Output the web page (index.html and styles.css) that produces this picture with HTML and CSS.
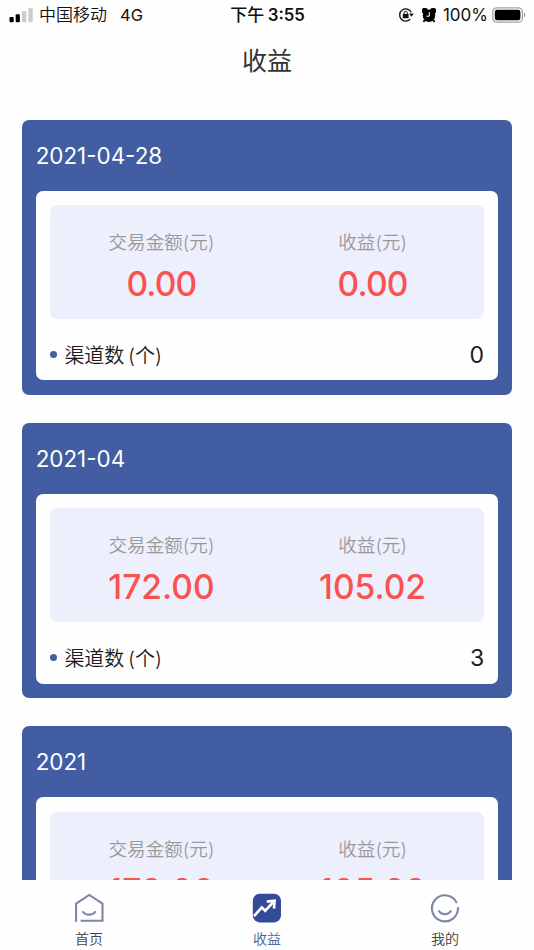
FILE: index.html
```html
<!DOCTYPE html>
<html lang="zh-CN">
<head>
<meta charset="utf-8">
<meta name="viewport" content="width=device-width, initial-scale=1">
<title>收益</title>
<link rel="stylesheet" href="styles.css">
</head>
<body>
<div class="app">
  <header class="status">
    <div class="status-left">
      <svg class="signal" width="24" height="16" viewBox="0 0 24 16"><rect x="0.5" y="10" width="4.2" height="5.2" rx="1" fill="#000"/><rect x="6.7" y="7.2" width="4.2" height="8" rx="1" fill="#000"/><rect x="13" y="4" width="4.4" height="11.2" rx="1" fill="#ccc"/><rect x="19.3" y="1" width="4.4" height="14.2" rx="1" fill="#ccc"/></svg>
      <span class="carrier">中国移动</span>
      <span class="network">4G</span>
    </div>
    <div class="status-time">下午 <span class="clock">3:55</span></div>
    <div class="status-right">
      <svg width="16" height="16" viewBox="0 0 16 16"><path d="M13.2 5.2A6.1 6.1 0 1 0 12.3 12.1" fill="none" stroke="#111" stroke-width="1.4"/><path d="M10.9 6.6h4.9l-2.3 3.2z" fill="#111"/><rect x="4.8" y="6.9" width="5.8" height="4.4" rx=".6" fill="#111"/><path d="M6.1 7.2V5.8a1.6 1.6 0 0 1 3.2 0v1.4" fill="none" stroke="#111" stroke-width="1"/></svg>
      <svg class="alarm" width="14" height="15" viewBox="0 0 14 15"><circle cx="7" cy="7.8" r="6.2"/><path d="M.2 4.8A3.2 3.2 0 0 1 5 .6L6 2 2 6zM13.8 4.8A3.2 3.2 0 0 0 9 .6L8 2l4 4z"/><path d="M2.7 12l-1.2 2M11.3 12l1.2 2" stroke="#000" stroke-width="1.8"/><path d="M7.3 4.2v4H4.4" fill="none" stroke="#fff" stroke-width="1"/></svg>
      <span class="percent">100%</span>
      <svg class="battery" width="34" height="16" viewBox="0 0 34 16"><rect x=".8" y=".8" width="29.6" height="14.4" rx="4" fill="#fff" stroke="#a3a3a3" stroke-width="1.3"/><rect x="2.8" y="2.8" width="25.6" height="10.4" rx="2.2" fill="#000"/><path d="M32 5.5c1.7.8 1.7 4.2 0 5z" fill="#999"/></svg>
    </div>
  </header>
  <h1 class="title">收益</h1>
  <main class="list">
    <section class="card">
      <h2 class="date">2021-04-28</h2>
      <div class="body">
        <div class="panel">
          <div class="stat"><span class="label">交易金额(元)</span><span class="value">0.00</span></div>
          <div class="stat"><span class="label">收益(元)</span><span class="value">0.00</span></div>
        </div>
        <div class="row"><span class="dot"></span><span class="name">渠道数 (个)</span><span class="count">0</span></div>
      </div>
    </section>
    <section class="card">
      <h2 class="date">2021-04</h2>
      <div class="body">
        <div class="panel">
          <div class="stat"><span class="label">交易金额(元)</span><span class="value wide">172.00</span></div>
          <div class="stat"><span class="label">收益(元)</span><span class="value wide">105.02</span></div>
        </div>
        <div class="row"><span class="dot"></span><span class="name">渠道数 (个)</span><span class="count">3</span></div>
      </div>
    </section>
    <section class="card">
      <h2 class="date">2021</h2>
      <div class="body">
        <div class="panel">
          <div class="stat"><span class="label">交易金额(元)</span><span class="value wide">172.00</span></div>
          <div class="stat"><span class="label">收益(元)</span><span class="value wide">105.02</span></div>
        </div>
      </div>
    </section>
  </main>
  <nav class="tabs">
    <a class="tab">
      <svg width="30" height="30" viewBox="0 0 30 30" fill="none" stroke="#7c86a5" stroke-width="2.1"><path d="M2.1 28.8V10.6L15.2 1.9 28.5 10.6V27.8H6.6"/><path d="M8.6 18.2c2.8 4.6 10.2 4.6 13 0"/></svg>
      <span>首页</span>
    </a>
    <a class="tab active">
      <svg width="30" height="30" viewBox="0 0 30 30"><rect x=".8" y="0.8" width="28.2" height="28.6" rx="7" fill="#334a97"/><path d="M2 23.2L9.8 14.4 13.2 17.8 21 9.4" fill="none" stroke="#fff" stroke-width="2.7"/><path d="M14.8 8.6L22.6 7.8 22 15.6" fill="none" stroke="#fff" stroke-width="2.6"/></svg>
      <span>收益</span>
    </a>
    <a class="tab">
      <svg width="30" height="30" viewBox="0 0 30 30" fill="none" stroke="#7c86a5" stroke-width="2.1"><path d="M26.8 10A13 13 0 1 0 27.9 14.2"/><path d="M8.6 17.6c2.6 4.8 10 4.8 12.6 0"/></svg>
      <span>我的</span>
    </a>
  </nav>
</div>
</body>
</html>
```
FILE: styles.css
```css
* { box-sizing: border-box; }
body {
  margin: 0;
  background: #fefefe;
  color: #1c1c1c;
  font-family: Inter, "Noto Sans CJK SC", sans-serif;
}
.app {
  height: 950px;
  display: flex;
  flex-direction: column;
  overflow: hidden;
}
.status {
  height: 30px;
  flex: none;
  display: grid;
  grid-template-columns: 1fr auto 1fr;
  align-items: center;
  padding: 0 8px 0 9px;
  color: #111;
  font-size: 17px;
  line-height: 30px;
  white-space: nowrap;
}
.status-left, .status-right { display: flex; align-items: center; }
.status-right { justify-content: flex-end; }
.signal { margin-right: 6px; }
.carrier { font-weight: 350; }
.network { margin-left: 13px; font-size: 16.5px; }
.status-time { font-weight: 500; word-spacing: -1px; }
.clock { font-weight: 600; font-size: 16.8px; }
.alarm { margin: 0 7px 0 8px; }
.percent { margin-right: 4px; }
.title {
  flex: none;
  margin: 0;
  height: 90px;
  padding-top: 1px;
  line-height: 60px;
  text-align: center;
  font-size: 25px;
  font-weight: 400;
  color: #333;
}
.list {
  flex: 1;
  min-height: 0;
  overflow: hidden;
  padding: 0 21.7px;
  display: flex;
  flex-direction: column;
  gap: 28.6px;
}
.card {
  flex: none;
  height: 274.6px;
  padding: 0 14px 14.2px;
  border-radius: 7px;
  background: #425da1;
  display: flex;
  flex-direction: column;
}
.date {
  margin: 0;
  height: 71px;
  line-height: 71px;
  color: #fff;
  font-size: 22.4px;
  font-weight: 400;
}
.body {
  flex: 1;
  padding: 14.2px 14.2px 0;
  border-radius: 7px;
  background: #fefefe;
}
.panel {
  height: 114px;
  padding: 22px 6px 0;
  border-radius: 7px;
  background: #eeeffd;
  display: grid;
  grid-template-columns: 1fr 1fr;
}
.stat {
  display: flex;
  flex-direction: column;
  align-items: center;
}
.label {
  height: 28px;
  line-height: 30px;
  color: #999;
  font-size: 18.6px;
  font-weight: 350;
}
.value {
  margin-top: 7px;
  line-height: 44px;
  color: #fa5151;
  font-size: 33.5px;
  font-weight: 500;
  letter-spacing: -.8px;
}
.wide { letter-spacing: 0; }
.row {
  height: 61px;
  padding-top: 10px;
  display: flex;
  align-items: center;
}
.dot {
  width: 7px;
  height: 7px;
  margin-right: 7.5px;
  border-radius: 50%;
  background: #425da1;
}
.name { font-size: 20px; font-weight: 350; word-spacing: -2px; }
.count { margin-left: auto; font-size: 23px; font-weight: 400; }
.tabs {
  flex: none;
  height: 70px;
  display: grid;
  grid-template-columns: repeat(3, 1fr);
  background: #fefefe;
}
.tab {
  display: flex;
  flex-direction: column;
  align-items: center;
  padding-top: 12.5px;
  color: #444;
  font-size: 14px;
  font-weight: 350;
}
.tab span { line-height: 20px; margin-top: 6px; }
.active { color: #425da1; }
```
